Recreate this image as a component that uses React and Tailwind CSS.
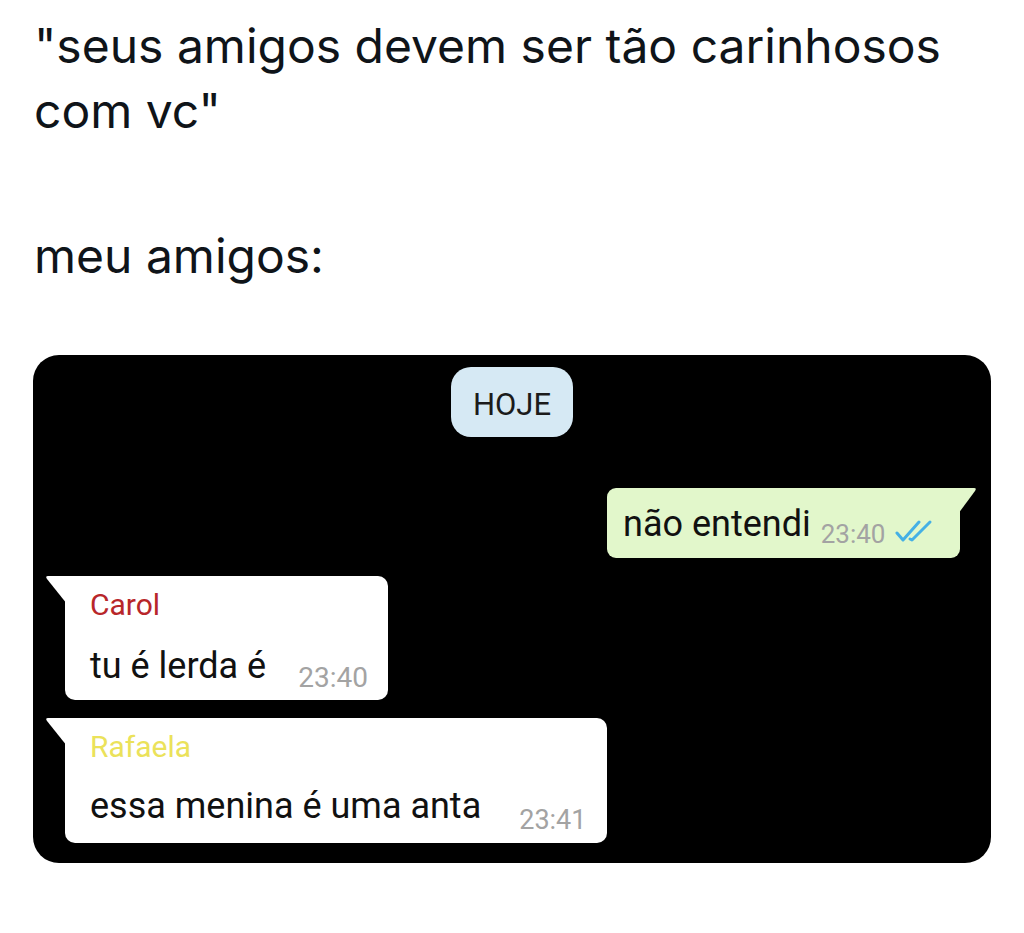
import React from "react";

function Checks() {
  return (
    <svg width="39" height="24" viewBox="0 0 39 24" fill="none" stroke="#45b0e5" strokeWidth="3" strokeLinecap="round" strokeLinejoin="round">
      <path d="M2 14 L8 21 L24 3" />
      <path d="M15 20 L17 21 L35 3" />
    </svg>
  );
}

function InTail() {
  return (
    <svg className="absolute top-0 left-[-20px]" width="22" height="28" viewBox="0 0 22 28">
      <path d="M22 0 L3 0 Q0 0 2 3 L22 28 Z" fill="#ffffff" />
    </svg>
  );
}

function OutTail() {
  return (
    <svg className="absolute top-0 right-[-18px]" width="20" height="26" viewBox="0 0 20 26">
      <path d="M0 0 L16 0 Q19 0 17 3 L0 26 Z" fill="#e2f7cb" />
    </svg>
  );
}

export default function App() {
  return (
    <div className="w-[1024px] h-[933px] bg-white overflow-hidden">
      <div className="pl-[34px] pt-[13px] text-[48px] leading-[65px] text-[#0f1419]" style={{ fontFamily: "Inter, 'Noto Sans', sans-serif" }}>
        <p>"seus amigos devem ser tão carinhosos<br />com vc"</p>
        <p className="mt-[80px]">meu amigos:</p>
      </div>

      <div className="ml-[33px] mt-[67px] w-[958px] h-[508px] bg-black rounded-[26px] px-[32px] pt-[12px] flex flex-col" style={{ fontFamily: "Roboto, 'Liberation Sans', sans-serif" }}>
        <div className="self-center w-[122px] h-[70px] rounded-[20px] bg-[#d6e9f4] flex items-center justify-center text-[31px] leading-none text-[#1b1b1b] pt-[4px]">
          HOJE
        </div>

        <div className="self-end mr-[-1px] mt-[51px] relative h-[70px] w-[353px] bg-[#e2f7cb] rounded-[9px] rounded-tr-none flex items-end pl-[16px] pb-[11px]">
          <OutTail />
          <span className="text-[36px] leading-[36px] text-[#111] mb-[5px]">não entendi</span>
          <span className="ml-[10px] text-[26px] leading-[26px] text-[#a3a3a3]">23:40</span>
          <span className="ml-[10px] mb-[4px]"><Checks /></span>
        </div>

        <div className="mt-[18px] relative self-start w-[323px] h-[124px] bg-white rounded-[10px] rounded-tl-none pl-[25px] pt-[14px] flex flex-col">
          <InTail />
          <div className="text-[30px] leading-[30px] text-[#b8262a]">Carol</div>
          <div className="mt-[28px] flex items-end">
            <span className="text-[36px] leading-[36px] text-[#111] mb-[8px]">tu é lerda é</span>
            <span className="ml-[32px] text-[28px] leading-[28px] text-[#a3a3a3]">23:40</span>
          </div>
        </div>

        <div className="mt-[18px] relative self-start w-[542px] h-[125px] bg-white rounded-[10px] rounded-tl-none pl-[25px] pt-[14px] flex flex-col">
          <InTail />
          <div className="text-[30px] leading-[30px] text-[#ebe25a]">Rafaela</div>
          <div className="mt-[26px] flex items-end">
            <span className="text-[36px] leading-[36px] text-[#111] mb-[10px]">essa menina é uma anta</span>
            <span className="ml-[38px] text-[27px] leading-[27px] text-[#a3a3a3]">23:41</span>
          </div>
        </div>
      </div>
    </div>
  );
}
